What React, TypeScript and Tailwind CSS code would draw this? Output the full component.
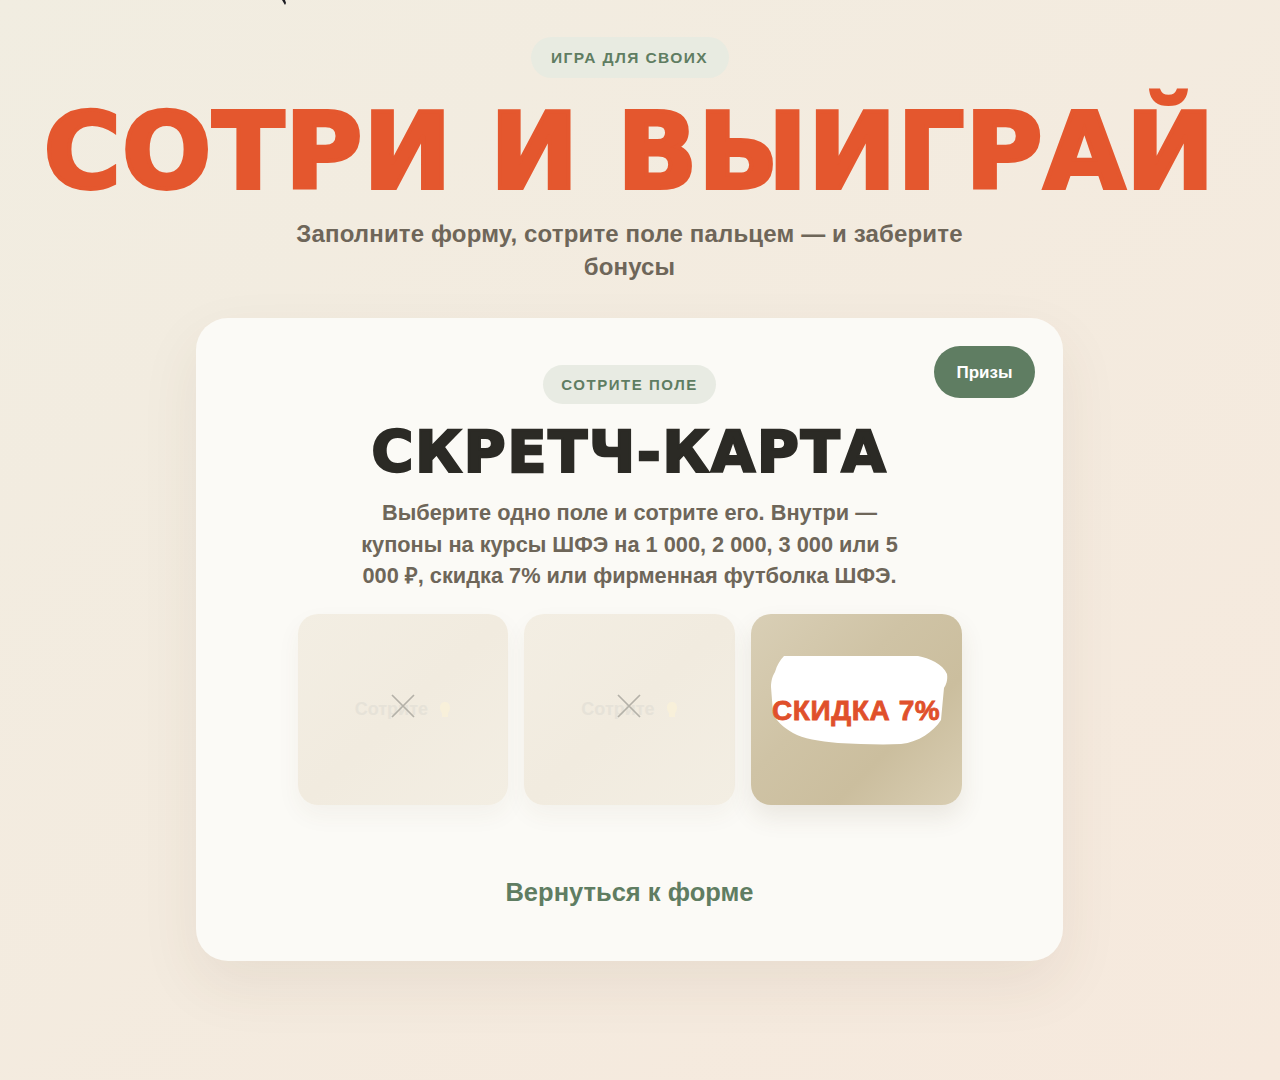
const sans = "font-['Liberation_Sans',Arial,sans-serif]";

function FadedCell() {
  return (
    <div className="relative flex h-[191px] items-center justify-center rounded-[20px] bg-gradient-to-br from-[#f3eee3] to-[#f3eee3] via-[#f1ebdf] shadow-[0_10px_24px_rgba(90,70,40,0.05)]">
      <div className="flex items-center gap-[11px] text-[18px] font-bold text-[#e6e2d8]">
        <span>Сотрите</span>
        <svg width="12" height="17" viewBox="0 0 12 17">
          <path d="M6 1C9 1 11 3 11 7C11 10 9 11 9 13L9 16L3 16L3 13C3 11 1 10 1 7C1 3 3 1 6 1Z" fill="#f8f0da" />
        </svg>
      </div>
      {/* the cross sits over the label */}
      <svg className="absolute left-1/2 top-[80px] -ml-[12px]" width="24" height="24" viewBox="0 0 24 24" fill="none" stroke="#b4b1a8" strokeWidth="1.7">
        <path d="M1 1L23 23M23 1L1 23" />
      </svg>
    </div>
  );
}

function RevealedCell() {
  return (
    <div className="relative flex h-[191px] items-center justify-center overflow-hidden rounded-[20px] bg-[linear-gradient(135deg,#d9cfb6_0%,#cfc3a5_40%,#cbbe9e_68%,#d9ceb3_100%)] shadow-[0_12px_24px_rgba(90,70,40,0.1)]">
      <svg className="absolute inset-0" width="210" height="191" viewBox="0 0 210 191">
        <path d="M33 42 L167 42 C178 44 192 50 196 60 C197 66 195 71 193 74 L190 106 C182 118 168 128 150 130 C130 131 108 130 87 129 C68 127 52 125 42 119 C32 113 25 107 22 99 L20 73 C20 66 22 61 24 58 C26 51 29 46 33 42Z" fill="#ffffff" />
      </svg>
      <span className="relative mt-[3px] whitespace-nowrap text-[28px] font-bold tracking-[0.6px] text-[#e0502b] [-webkit-text-stroke:0.8px_#e0502b]">СКИДКА 7%</span>
    </div>
  );
}

export default function App() {
  return (
    <div className={`${sans} relative flex h-[1080px] flex-col items-center overflow-hidden bg-gradient-to-br from-[#f1ede1] to-[#f6e9dd] pr-[21px] pt-[37px]`}>
      {/* stray cursor tip at the very top of the capture */}
      <svg className="absolute left-[278px] top-0" width="10" height="6" viewBox="0 0 10 6">
        <path d="M4 0L7 5L8 3L7 0Z" fill="#1c1c22" />
      </svg>

      <div className="flex h-[41px] w-[198px] items-center justify-center rounded-full bg-[#e8ebe1] text-[15.5px] font-bold tracking-[1.4px] text-[#5f7d62]">
        ИГРА ДЛЯ СВОИХ
      </div>

      <h1 className="mt-[6px] whitespace-nowrap font-['DejaVu_Sans',sans-serif] text-[105px] font-bold leading-[136px] tracking-[1.2px] text-[#e4572e] [-webkit-text-stroke:4px_#e4572e]">
        СОТРИ И ВЫИГРАЙ
      </h1>

      <p className="mt-[-3px] w-[700px] text-center text-[24px] font-bold leading-[33px] tracking-[0.15px] text-[#6e6659]">
        Заполните форму, сотрите поле пальцем — и заберите бонусы
      </p>

      <section className="relative mt-[35px] flex h-[643px] w-[867px] flex-col items-center rounded-[32px] bg-[#fbfaf6] pt-[47px] shadow-[0_24px_60px_rgba(90,70,40,0.08)]">
        <button className="absolute right-[28px] top-[28px] h-[52px] w-[101px] rounded-full bg-[#5f7d62] pt-[1px] text-[17px] font-bold text-white">
          Призы
        </button>

        <div className="flex h-[39px] w-[173px] items-center justify-center rounded-full bg-[#e8ebe3] pt-[1px] text-[15px] font-bold tracking-[1.55px] text-[#5f7d62]">
          СОТРИТЕ ПОЛЕ
        </div>

        <h2 className="mt-[11px] whitespace-nowrap font-['DejaVu_Sans',sans-serif] text-[57px] font-bold leading-[74px] tracking-[1.9px] text-[#2b2a25] [-webkit-text-stroke:2.5px_#2b2a25]">
          СКРЕТЧ-КАРТА
        </h2>

        <p className="mt-[8px] w-[560px] text-center text-[21.75px] font-bold leading-[31.7px] text-[#6e6659]">
          Выберите одно поле и сотрите его. Внутри — купоны на курсы ШФЭ на 1 000, 2 000, 3 000 или 5 000 ₽, скидка 7% или фирменная футболка ШФЭ.
        </p>

        <div className="mt-[22px] grid w-[664px] grid-cols-3 gap-[16px]">
          <FadedCell />
          <FadedCell />
          <RevealedCell />
        </div>

        <a className="mt-[71px] text-[25.5px] font-bold leading-[32px] text-[#5f7d62]">Вернуться к форме</a>
      </section>
    </div>
  );
}
